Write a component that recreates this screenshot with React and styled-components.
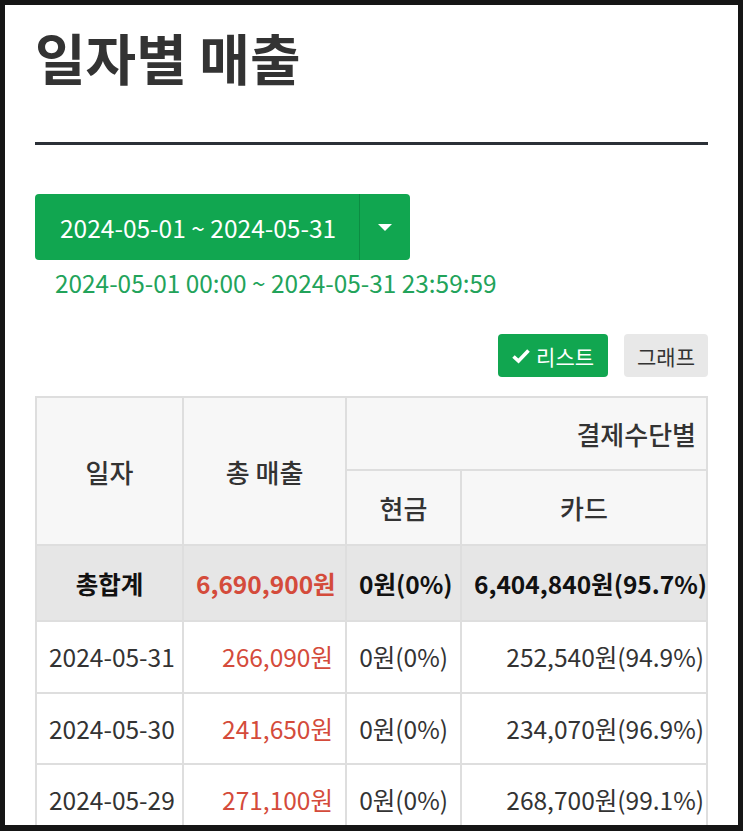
import React from "react";
import styled, { createGlobalStyle } from "styled-components";

const Global = createGlobalStyle`
  html, body { margin: 0; padding: 0; background: #151515; }
  body { font-family: "Noto Sans CJK KR", "Noto Sans", sans-serif; }
`;

const Frame = styled.div`
  width: 743px;
  height: 831px;
  box-sizing: border-box;
  border-style: solid;
  border-color: #151515;
  border-width: 5px 5px 6px 5px;
  background: #151515;
  overflow: hidden;
`;

const Page = styled.div`
  background: #fff;
  height: 100%;
  padding: 0 30px;
  box-sizing: border-box;
  overflow: hidden;
  color: #333;
`;

const Title = styled.h1`
  margin: 0;
  padding-top: 15px;
  font-size: 55px;
  font-weight: 700;
  line-height: 72px;
  color: #333;
  letter-spacing: 0;
`;

const Rule = styled.hr`
  margin: 50px 0 0;
  border: 0;
  height: 3px;
  background: #2b3037;
`;

const DateGroup = styled.div`
  display: inline-flex;
  margin-top: 49px;
  height: 66px;
  border-radius: 4px;
  overflow: hidden;
  background: #11a650;
`;

const DateMain = styled.div`
  display: flex;
  align-items: center;
  padding: 0 0 0 25px;
  width: 325px;
  box-sizing: border-box;
  color: #fff;
  font-size: 24.5px;
  white-space: nowrap;
  border-right: 1px solid #0c8c42;
`;

const Caret = styled.div`
  width: 50px;
  display: flex;
  align-items: center;
  justify-content: center;
  &::after {
    content: "";
    border-left: 7px solid transparent;
    border-right: 7px solid transparent;
    border-top: 7px solid #fff;
  }
`;

const Range = styled.div`
  margin: 4px 0 0 20px;
  color: #22a35a;
  font-size: 24.4px;
  line-height: 38px;
  white-space: nowrap;
`;

const Toggle = styled.div`
  display: flex;
  justify-content: flex-end;
  gap: 16px;
  margin-top: 32px;
`;

const ToggleBtn = styled.div`
  display: flex;
  align-items: center;
  gap: 6px;
  height: 43px;
  padding: 0 ${(p) => (p.$active ? "14px" : "13px")};
  border-radius: 4px;
  font-size: 21px;
  background: ${(p) => (p.$active ? "#11a650" : "#e8e8e8")};
  color: ${(p) => (p.$active ? "#fff" : "#333")};
`;

const Table = styled.table`
  margin-top: 19px;
  width: 100%;
  border-collapse: collapse;
  table-layout: fixed;
  font-size: 24.5px;
  td, th {
    border: 2px solid #dedede;
  }
`;

const Th = styled.th`
  background: #f7f7f7;
  font-weight: 500;
  font-size: 26px;
  color: #333;
  height: ${(p) => p.$h || 71}px;
  text-align: ${(p) => p.$align || "center"};
  padding: 0 10px;
`;

const Td = styled.td`
  height: ${(p) => (p.$total ? 74 : 69.5)}px;
  padding: 0 12px;
  text-align: ${(p) => p.$align || "right"};
  font-weight: ${(p) => (p.$total ? 700 : 400)};
  color: ${(p) => (p.$red ? "#d44b3b" : p.$total ? "#111" : "#333")};
  background: ${(p) => (p.$total ? "#e6e6e6" : "#fff")};
  white-space: nowrap;
  &:last-child { padding-right: 2px; }
`;

const rows = [
  ["2024-05-31", "266,090원", "0원(0%)", "252,540원(94.9%)"],
  ["2024-05-30", "241,650원", "0원(0%)", "234,070원(96.9%)"],
  ["2024-05-29", "271,100원", "0원(0%)", "268,700원(99.1%)"],
];

export default function App() {
  return (
    <>
      <Global />
      <Frame>
        <Page>
          <Title>일자별 매출</Title>
          <Rule />
          <DateGroup>
            <DateMain>2024-05-01 ~ 2024-05-31</DateMain>
            <Caret />
          </DateGroup>
          <Range>2024-05-01 00:00 ~ 2024-05-31 23:59:59</Range>
          <Toggle>
            <ToggleBtn $active>
              <svg width="18" height="16" viewBox="0 0 18 16">
                <path d="M1.5 8.5 L6.5 13 L16.5 2.5" fill="none" stroke="#fff" strokeWidth="3.6" />
              </svg>
              리스트
            </ToggleBtn>
            <ToggleBtn>그래프</ToggleBtn>
          </Toggle>
          <Table>
            <colgroup>
              <col style={{ width: 147 }} />
              <col style={{ width: 163 }} />
              <col style={{ width: 115 }} />
              <col />
            </colgroup>
            <thead>
              <tr>
                <Th rowSpan={2}>일자</Th>
                <Th rowSpan={2}>총 매출</Th>
                <Th colSpan={2} $align="right" $h={71}>결제수단별</Th>
              </tr>
              <tr>
                <Th $h={73}>현금</Th>
                <Th $h={73}>카드</Th>
              </tr>
            </thead>
            <tbody>
              <tr>
                <Td $total $align="center">총합계</Td>
                <Td $total $red>6,690,900원</Td>
                <Td $total>0원(0%)</Td>
                <Td $total>6,404,840원(95.7%)</Td>
              </tr>
              {rows.map((r) => (
                <tr key={r[0]}>
                  <Td $align="center">{r[0]}</Td>
                  <Td $red>{r[1]}</Td>
                  <Td>{r[2]}</Td>
                  <Td>{r[3]}</Td>
                </tr>
              ))}
            </tbody>
          </Table>
        </Page>
      </Frame>
    </>
  );
}
